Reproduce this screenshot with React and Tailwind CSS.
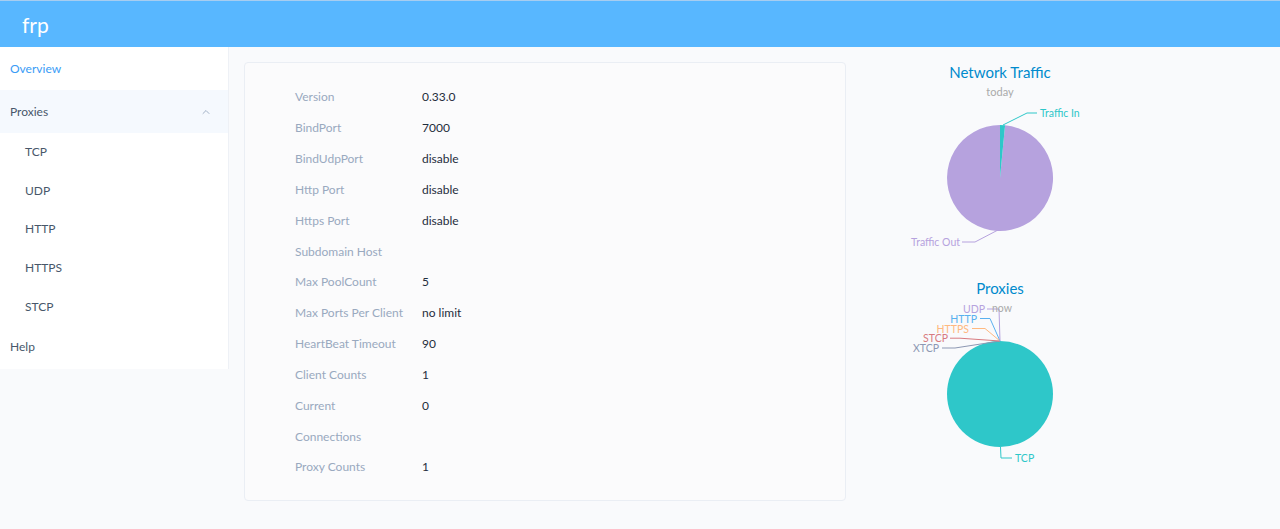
import { ChevronUp } from 'lucide-react';

const info = [
  ['Version', '0.33.0'],
  ['BindPort', '7000'],
  ['BindUdpPort', 'disable'],
  ['Http Port', 'disable'],
  ['Https Port', 'disable'],
  ['Subdomain Host', ''],
  ['Max PoolCount', '5'],
  ['Max Ports Per Client', 'no limit'],
  ['HeartBeat Timeout', '90'],
  ['Client Counts', '1'],
  ['Current', '0'],
  ['Connections', ''],
  ['Proxy Counts', '1'],
];

const subItems = ['TCP', 'UDP', 'HTTP', 'HTTPS', 'STCP'];

function TrafficChart() {
  return (
    <svg width="308" height="200" viewBox="0 0 308 200" className="block">
      <text x="154" y="10" textAnchor="middle" dominantBaseline="central" fontSize="15" fill="#008acd">Network Traffic</text>
      <text x="154" y="29" textAnchor="middle" dominantBaseline="central" fontSize="11" fill="#aaaaaa">today</text>
      <path d="M154,116 L159.08,63.24 A53,53 0 1,1 154,63 Z" fill="#b6a2de" />
      <path d="M154,116 L154,63 A53,53 0 0,1 159.08,63.24 Z" fill="#2ec7c9" />
      <polyline points="157,63 181,51 191,51" fill="none" stroke="#2ec7c9" strokeWidth="1" />
      <text x="194" y="51" dominantBaseline="central" fontSize="10.5" fill="#2ec7c9">Traffic In</text>
      <polyline points="152,168 129,180 116,180" fill="none" stroke="#b6a2de" strokeWidth="1" />
      <text x="114" y="180" textAnchor="end" dominantBaseline="central" fontSize="10.5" fill="#b6a2de">Traffic Out</text>
    </svg>
  );
}

function ProxiesChart() {
  // zero-value slices all meet at the top of the pie
  const labels = [
    { name: 'XTCP', color: '#8d98b3', pts: '96,76 109,76 154,69', x: 93, y: 76 },
    { name: 'STCP', color: '#d87a80', pts: '104,66.2 114,66.2 154,69', x: 102, y: 66.2 },
    { name: 'HTTPS', color: '#ffb980', pts: '126,56.5 139,56.5 154,69', x: 123, y: 56.5 },
    { name: 'HTTP', color: '#5ab1ef', pts: '134,46.5 144,46.5 154,69', x: 131, y: 46.5 },
    { name: 'UDP', color: '#b6a2de', pts: '141,37 153,37 154,69', x: 139, y: 37 },
  ];
  return (
    <svg width="308" height="210" viewBox="0 0 308 210" className="block">
      <text x="154" y="16" textAnchor="middle" dominantBaseline="central" fontSize="15" fill="#008acd">Proxies</text>
      <circle cx="154" cy="122" r="53" fill="#2ec7c9" />
      {labels.map((l) => (
        <g key={l.name}>
          <polyline points={l.pts} fill="none" stroke={l.color} strokeWidth="1" />
          <text x={l.x} y={l.y} textAnchor="end" dominantBaseline="central" fontSize="10.5" fill={l.color}>{l.name}</text>
        </g>
      ))}
      <text x="156" y="36" textAnchor="middle" dominantBaseline="central" fontSize="10.5" fill="#aaaaaa">now</text>
      <polyline points="154.5,175 155,186 166,186" fill="none" stroke="#2ec7c9" strokeWidth="1" />
      <text x="169" y="186" dominantBaseline="central" fontSize="10.5" fill="#2ec7c9">TCP</text>
    </svg>
  );
}

export default function App() {
  return (
    <div className="min-h-[529px] bg-[#f9fafc] text-[#48576a]" style={{ fontFamily: 'Lato, "Noto Sans", sans-serif' }}>
      {/* Header */}
      <div className="h-[47px] bg-[#58b7ff] border-t border-[#a7cdf0] flex items-center pl-[22px]">
        <span className="text-[21px] text-white leading-none">frp</span>
      </div>

      <div className="flex items-start">
        {/* Sidebar */}
        <div className="w-[229px] bg-white border-r border-[#eef1f6] text-[12px] shrink-0">
          <div className="h-[43px] flex items-center pl-[10px] text-[#3a9cf6]">Overview</div>
          <div className="h-[43px] flex items-center justify-between pl-[10px] pr-[16px] bg-[#f5f9fe]">
            <span>Proxies</span>
            <ChevronUp size={12} strokeWidth={1.8} className="text-[#97a8be]" />
          </div>
          {subItems.map((s) => (
            <div key={s} className="h-[38.6px] flex items-center pl-[25px]">{s}</div>
          ))}
          <div className="h-[43px] flex items-center pl-[10px]">Help</div>
        </div>

        {/* Main */}
        <div className="flex pl-[15px] pt-[15px]">
          <div className="w-[602px] h-[439px] border border-[#eaeef4] rounded bg-[#fbfbfc] pt-[19px] pl-[50px]">
            {info.map(([k, v]) => (
              <div key={k} className="h-[30.83px] flex items-center text-[12px]">
                <span className="w-[127px] text-[#99a9bf]">{k}</span>
                <span className="text-[#1f2d3d]">{v}</span>
              </div>
            ))}
          </div>

          <div className="w-[308px] flex flex-col">
            <TrafficChart />
            <div className="h-[10px]" />
            <ProxiesChart />
          </div>
        </div>
      </div>
    </div>
  );
}
